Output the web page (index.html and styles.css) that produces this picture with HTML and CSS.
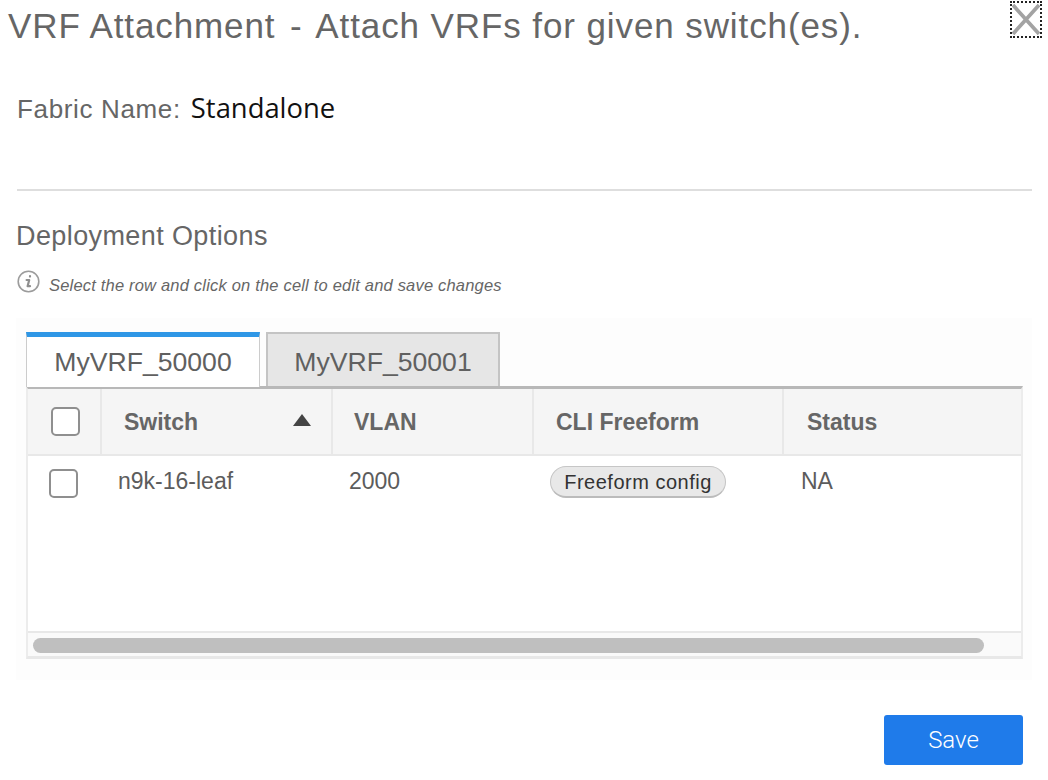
FILE: index.html
```html
<!DOCTYPE html>
<html lang="en">
<head>
<meta charset="utf-8">
<title>VRF Attachment</title>
<link rel="stylesheet" href="styles.css">
</head>
<body>
<div class="dialog">
  <h1 class="title">VRF Attachment <span class="dash">-</span> Attach VRFs for given switch(es).</h1>
  <button class="close" aria-label="Close">
    <svg width="30" height="33" viewBox="0 0 30 33"><path d="M1 1 L29 32 M29 1 L1 32" stroke="#a3a3a3" stroke-width="4" fill="none"/></svg>
  </button>
  <div class="fabric"><span class="fabric-label">Fabric Name:</span> <span class="fabric-value">Standalone</span></div>
  <hr class="rule">
  <h2 class="section">Deployment Options</h2>
  <div class="hint">
    <svg class="hint-icon" width="23" height="23" viewBox="0 0 23 23"><circle cx="11.5" cy="11.5" r="10.3" fill="none" stroke="#9c9c9c" stroke-width="1.6"/><path d="M13 6.2v.4M9.6 10h2.6l-1.6 6.2h2.4" fill="none" stroke="#8f8f8f" stroke-width="2.2" stroke-linecap="round" stroke-linejoin="round"/></svg>
    <span class="hint-text">Select the row and click on the cell to edit and save changes</span>
  </div>
  <div class="panel">
    <div class="tabs">
      <div class="tab tab-active">MyVRF_50000</div>
      <div class="tab">MyVRF_50001</div>
    </div>
    <div class="table">
      <div class="row head">
        <div class="cell c0"><span class="check"></span></div>
        <div class="cell c1"><span class="label">Switch</span><span class="sort"></span></div>
        <div class="cell c2"><span class="label">VLAN</span></div>
        <div class="cell c3"><span class="label">CLI Freeform</span></div>
        <div class="cell c4"><span class="label">Status</span></div>
      </div>
      <div class="row body">
        <div class="cell c0"><span class="check"></span></div>
        <div class="cell c1">n9k-16-leaf</div>
        <div class="cell c2">2000</div>
        <div class="cell c3"><span class="pill">Freeform config</span></div>
        <div class="cell c4">NA</div>
      </div>
      <div class="scroll"><div class="thumb"></div></div>
    </div>
  </div>
  <div class="actions"><button class="save">Save</button></div>
</div>
</body>
</html>
```
FILE: styles.css
```css
* { box-sizing: border-box; }
html, body { margin: 0; padding: 0; background: #fff; }
body { font-family: "Liberation Sans", Arial, sans-serif; color: #5f5f5f; height: 780px; overflow: hidden; }
.dialog { position: relative; width: 1048px; height: 780px; padding: 0 16px; }
.title { margin: 0 0 0 -8px; padding-top: 6px; height: 70px; font-size: 35px; line-height: 40px; font-weight: 400; color: #666; letter-spacing: .9px; white-space: nowrap; }
.dash { margin: 0 4px; }
.close { position: absolute; left: 1010px; top: 1px; width: 32px; height: 37px; padding: 0; background: none; border: 2px dotted #222; display: flex; align-items: center; justify-content: center; }
.fabric { height: 119px; padding-top: 16px; line-height: 44px; display: flex; align-items: baseline; gap: 10px; padding-left: 1px; }
.fabric-label { font-size: 26px; letter-spacing: .65px; color: #666; }
.fabric-value { font-family: "Open Sans", sans-serif; font-size: 27.4px; color: #111; }
.rule { margin: 0 0 0 1px; border: 0; border-top: 2px solid #dedede; width: 1015px; }
.section { margin: 0; padding: 28px 0 0; height: 78px; font-size: 27px; line-height: 34px; font-weight: 400; color: #666; letter-spacing: .4px; }
.hint { display: flex; align-items: center; gap: 9px; height: 30px; font-size: 16.5px; letter-spacing: .19px; font-style: italic; color: #666; padding-left: 1px; }
.hint-icon { margin-top: -5px; }
.hint-text { padding-top: 2px; }
.panel { margin-top: 19px; width: 1016px; height: 362px; background: #fdfdfd; padding: 14px 9px 0 10px; }
.tabs { display: flex; gap: 6px; height: 55px; }
.tab { width: 234px; height: 54px; background: #e6e6e6; border: 2px solid #c4c4c4; border-bottom: 0; font-size: 26.6px; line-height: 56px; text-align: center; color: #606060; }
.tab-active { background: #fff; border: 0; border-top: 5px solid #2f97e6; border-left: 1px solid #ccc; border-right: 1px solid #ccc; line-height: 51px; height: 55px; position: relative; z-index: 1; }
.table { width: 997px; height: 273px; margin-top: -1px; border-top: 3px solid #b8b8b8; border-left: 2px solid #ececec; border-right: 2px solid #ececec; border-bottom: 3px solid #e8e8e8; background: #fff; display: flex; flex-direction: column; }
.row { display: grid; grid-template-columns: 74px 231px 201px 250px 1fr; }
.head { height: 67px; background: #f5f5f5; border-bottom: 2px solid #e8e8e8; font-size: 23px; font-weight: 700; color: #666; }
.head .cell { border-right: 2px solid #e8e8e8; padding-left: 22px; display: flex; align-items: center; }
.head .label { padding-top: 2px; }
.head .cell.c4 { border-right: 0; padding-left: 23px; }
.head .c0 { padding-left: 23px; }
.head .c1 { justify-content: space-between; padding-right: 20px; }
.head .c2 { padding-left: 21px; }
.sort { width: 0; height: 0; border-left: 9px solid transparent; border-right: 9px solid transparent; border-bottom: 12px solid #444; margin-bottom: 4px; }
.check { display: block; width: 29px; height: 29px; border: 2px solid #8f8f8f; border-radius: 5px; background: #fff; }
.body { height: 175px; font-size: 23px; color: #5c5c5c; }
.body .cell { padding: 10px 0 0 16px; line-height: 30px; }
.body .c0 { padding-left: 21px; padding-top: 13px; }
.body .c4 { padding-left: 17px; }
.pill { display: inline-block; width: 176px; height: 32px; border: 1px solid #c6c6c6; border-bottom: 2px solid #bbb; border-radius: 16px; background: #e8e8e8; font-size: 20px; line-height: 30px; letter-spacing: .5px; text-align: center; color: #333; }
.scroll { flex: 1; border-top: 2px solid #e8e8e8; background: #fafafa; padding: 5px 0 0 5px; }
.thumb { width: 951px; height: 15px; border-radius: 8px; background: #bfbfbf; }
.actions { display: flex; justify-content: flex-end; padding: 35px 9px 0 0; width: 1016px; }
.save { width: 139px; height: 50px; border: 0; border-radius: 3px; background: #1f7bea; color: #fff; font-family: Roboto, "Liberation Sans", sans-serif; font-weight: 300; font-size: 24px; padding: 0; }
```
